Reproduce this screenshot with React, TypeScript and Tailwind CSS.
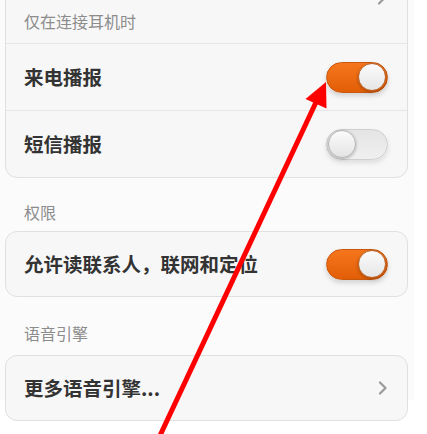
import React from "react";

const font = { fontFamily: '"Noto Sans CJK SC", "Noto Sans", sans-serif' };

function Toggle({ on }: { on: boolean }) {
  return on ? (
    <div className="flex h-[31px] w-[62px] items-center justify-end rounded-full border border-[#c9580f] bg-gradient-to-b from-[#f5761c] to-[#e25e06] pr-[1px] shadow-[0_3px_5px_rgba(0,0,0,0.15)]">
      <div className="h-[28px] w-[28px] rounded-full border border-[#b9652c] bg-gradient-to-b from-[#fbfbfb] to-[#e6e6e6] shadow-[0_1px_3px_rgba(0,0,0,0.3)]" />
    </div>
  ) : (
    <div className="flex h-[31px] w-[62px] items-center justify-start rounded-full border border-[#cfcfcf] bg-gradient-to-b from-[#e4e4e4] to-[#f0f0f0] pl-[1px] shadow-[0_3px_5px_rgba(0,0,0,0.1)]">
      <div className="h-[28px] w-[28px] rounded-full border border-[#b5b5b5] bg-gradient-to-b from-[#fbfbfb] to-[#e4e4e4] shadow-[0_1px_3px_rgba(0,0,0,0.3)]" />
    </div>
  );
}

function Chevron() {
  return (
    <svg width="10" height="14" viewBox="0 0 10 14" className="shrink-0">
      <path d="M2 1.5 L7.5 7 L2 12.5" fill="none" stroke="#9a9a9a" strokeWidth="2.2" strokeLinecap="round" strokeLinejoin="round" />
    </svg>
  );
}

function Row({ label, children, divider, tall }: { label: string; children: React.ReactNode; divider?: boolean; tall?: boolean }) {
  return (
    <div className={`flex ${tall ? "h-[67px]" : "h-[64px]"} items-center justify-between pl-[18px] pr-[19px] ${divider ? "border-t border-[#e6e6e6]" : ""}`}>
      <span className="text-[19.5px] font-bold text-[#333333]">{label}</span>
      {children}
    </div>
  );
}

function SectionLabel({ text }: { text: string }) {
  return <div className="pl-[19px] text-[16px] leading-none text-[#8c8c8c]">{text}</div>;
}

export default function App() {
  return (
    <div className="relative h-[434px] w-[427px] overflow-hidden bg-white" style={font}>
      <div className="h-full w-[414px] bg-[#fbfbfb] pl-[5px] pr-[6px]">
        <div className="-mt-[34px] overflow-hidden rounded-[12px] border border-[#e0e0e0] bg-[#f7f7f7]">
          <div className="flex h-[76px] items-end justify-between pl-[18px] pr-[19px]">
            <span className="pb-[12px] text-[16px] leading-[20px] text-[#8c8c8c]">仅在连接耳机时</span>
            <div className="-mt-[14px] self-center pr-[1px]">
              <Chevron />
            </div>
          </div>
          <Row label="来电播报" divider tall>
            <Toggle on />
          </Row>
          <Row label="短信播报" divider tall>
            <Toggle on={false} />
          </Row>
        </div>

        <div className="pt-[26px] pb-[11px]">
          <SectionLabel text="权限" />
        </div>
        <div className="overflow-hidden rounded-[12px] border border-[#e0e0e0] bg-[#f7f7f7]">
          <Row label="允许读联系人，联网和定位">
            <Toggle on />
          </Row>
        </div>

        <div className="pt-[28px] pb-[14px]">
          <SectionLabel text="语音引擎" />
        </div>
        <div className="overflow-hidden rounded-[12px] border border-[#e0e0e0] bg-[#f7f7f7]">
          <Row label="更多语音引擎...">
            <Chevron />
          </Row>
        </div>
      </div>

      <svg className="pointer-events-none absolute left-0 top-0" width="427" height="434" viewBox="0 0 427 434">
        <line x1="157" y1="442" x2="318" y2="98" stroke="#ff0000" strokeWidth="5" />
        <polygon points="326,82 305.5,99 326.5,108.5" fill="#ff0000" />
      </svg>
    </div>
  );
}
